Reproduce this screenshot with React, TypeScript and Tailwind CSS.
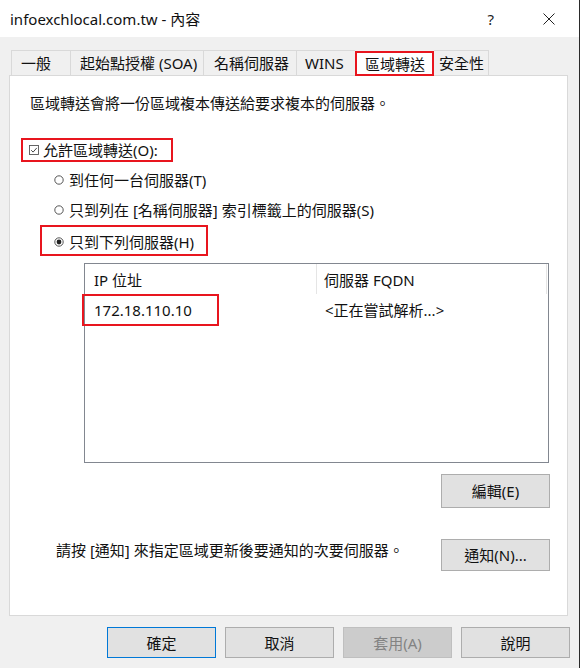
import React from "react";

const Radio = ({ checked }: { checked?: boolean }) => (
  <svg width="10" height="10" viewBox="0 0 10 10" className="shrink-0">
    <circle cx="5" cy="5" r="4.2" fill="white" stroke="#444" strokeWidth="0.9" />
    {checked && <circle cx="5" cy="5" r="2.4" fill="#222" />}
  </svg>
);

const Check = () => (
  <svg width="10" height="10" viewBox="0 0 10 10" className="shrink-0">
    <rect x="0.5" y="0.5" width="9" height="9" fill="white" stroke="#555" strokeWidth="0.9" />
    <path d="M2.2 5.2 L4.1 7.1 L7.8 2.9" fill="none" stroke="#333" strokeWidth="0.9" />
  </svg>
);

const Btn = ({
  children,
  className = "",
}: {
  children: React.ReactNode;
  className?: string;
}) => (
  <div
    className={
      "w-[109px] flex items-center justify-center border " + className
    }
  >
    {children}
  </div>
);

export default function App() {
  return (
    <div className="w-[580px] h-[668px] bg-[#f0f0f0] border-r border-[#2a2a2a] flex flex-col text-[15px] leading-[20px] text-[#111] font-['Segoe_UI','Noto_Sans','Noto_Sans_CJK_TC',sans-serif] overflow-hidden">
      {/* title bar */}
      <div className="h-[37px] bg-white flex items-center pl-[10px] shrink-0">
        <span className="text-[15px]">infoexchlocal.com.tw - 內容</span>
        <span className="ml-auto text-[15px] text-[#222]">?</span>
        <svg width="12" height="12" viewBox="0 0 12 12" className="ml-[49px] mr-[24px]">
          <path d="M0.5 0.5 L11.5 11.5 M11.5 0.5 L0.5 11.5" stroke="#222" strokeWidth="1" />
        </svg>
      </div>

      {/* tabs */}
      <div className="h-[38px] flex items-end pl-[11px] shrink-0 relative z-10">
        <div className="w-[59px] h-[25px] border-t border-l border-[#d9d9d9] pl-[9px] flex items-center">一般</div>
        <div className="w-[133px] h-[25px] border-t border-l border-[#d9d9d9] pl-[9px] flex items-center">起始點授權 (SOA)</div>
        <div className="w-[93px] h-[25px] border-t border-l border-[#d9d9d9] pl-[10px] flex items-center">名稱伺服器</div>
        <div className="w-[59px] h-[25px] border-t border-l border-[#d9d9d9] pl-[8px] flex items-center">WINS</div>
        <div className="w-[79px] h-[25px] border-2 border-[#e8151e] bg-white pl-[8px] flex items-center -mb-[1px]">區域轉送</div>
        <div className="w-[55px] h-[25px] border-t border-r border-[#d9d9d9] pl-[5px] flex items-center">安全性</div>
      </div>

      {/* panel */}
      <div className="ml-[9px] w-[559px] h-[541px] bg-white border border-[#d9d9d9] shrink-0 flex flex-col">
        <div className="pt-[17px] pl-[20px]">區域轉送會將一份區域複本傳送給要求複本的伺服器。</div>

        <div className="mt-[25px] ml-[11px] w-[152px] h-[24px] border-2 border-[#e8151e] flex items-center pl-[6px] gap-[4px]">
          <Check />
          <span>允許區域轉送(O):</span>
        </div>

        <div className="mt-[8px] ml-[44px] flex items-center gap-[5px]">
          <Radio />
          <span>到任何一台伺服器(T)</span>
        </div>
        <div className="mt-[10px] ml-[44px] flex items-center gap-[5px]">
          <Radio />
          <span>只到列在 [名稱伺服器] 索引標籤上的伺服器(S)</span>
        </div>
        <div className="mt-[5px] ml-[30px] w-[168px] h-[31px] border-2 border-[#e8151e] flex items-center pl-[12px] gap-[5px] pt-[2px]">
          <Radio checked />
          <span>只到下列伺服器(H)</span>
        </div>

        {/* list box */}
        <div className="mt-[7px] ml-[74px] w-[465px] h-[200px] border border-[#828790] relative">
          <div className="h-[30px] flex">
            <div className="w-[232px] border-r border-[#e5e5e5] pl-[9px] pt-[6px]">IP 位址</div>
            <div className="w-[230px] border-r border-[#e5e5e5] pl-[7px] pt-[6px]">伺服器 FQDN</div>
          </div>
          <div className="flex h-[32px] items-center">
            <div className="w-[232px] pl-[9px]">172.18.110.10</div>
            <div className="pl-[8px]">&lt;正在嘗試解析...&gt;</div>
          </div>
          <div className="absolute left-[-3px] top-[30px] w-[137px] h-[32px] border-2 border-[#e8151e]" />
        </div>

        <div className="mt-[11px] ml-[431px] flex">
          <Btn className="h-[34px] bg-[#e1e1e1] border-[#adadad]">編輯(E)</Btn>
        </div>

        <div className="mt-[31px] flex items-start">
          <div className="ml-[46px] mt-[1px]">請按 [通知] 來指定區域更新後要通知的次要伺服器。</div>
          <Btn className="ml-auto mr-[17px] h-[32px] bg-[#e1e1e1] border-[#adadad]">通知(N)...</Btn>
        </div>
      </div>

      {/* bottom buttons */}
      <div className="mt-[11px] ml-[107px] flex gap-[9px]">
        <Btn className="h-[31px] bg-[#e1e1e1] border-[#0078d7]">確定</Btn>
        <Btn className="h-[31px] bg-[#e1e1e1] border-[#adadad]">取消</Btn>
        <Btn className="h-[31px] bg-[#cccccc] border-[#bfbfbf] text-[#838383]">套用(A)</Btn>
        <Btn className="h-[31px] bg-[#e1e1e1] border-[#adadad]">說明</Btn>
      </div>
    </div>
  );
}
